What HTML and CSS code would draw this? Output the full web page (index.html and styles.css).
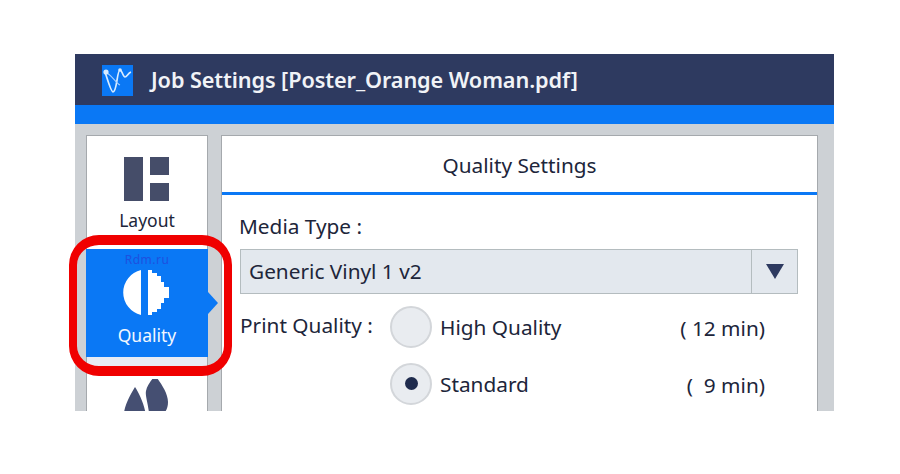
FILE: index.html
```html
<!DOCTYPE html>
<html lang="en">
<head>
<meta charset="utf-8">
<title>Job Settings</title>
<link rel="stylesheet" href="styles.css">
</head>
<body>
<div class="window">
  <header class="titlebar">
    <svg class="logo" viewBox="0 0 31 31" width="31" height="31" aria-hidden="true">
      <rect width="31" height="31" fill="#0a78f5"/>
      <path d="M3 7C6 16 9 27 11 27C15 27 15 5 18 5C20 5 21 12 23 12C25 12 26 8 29 7" fill="none" stroke="#d9ecff" stroke-width="1.7"/>
      <path d="M3 7C9 9 14 18 18 20" fill="none" stroke="#a9d0ff" stroke-width="1.1"/>
      <circle cx="4" cy="7" r="2.6" fill="#d9ecff"/>
      <circle cx="18" cy="5" r="1.8" fill="#d9ecff"/>
    </svg>
    <span class="title">Job Settings [Poster_Orange Woman.pdf]</span>
  </header>
  <div class="accent"></div>
  <div class="body">
    <nav class="sidebar">
      <div class="tab tab-layout">
        <svg class="icon-shift" viewBox="0 0 45 45" width="45" height="45" aria-hidden="true">
          <rect x="0" y="0" width="19" height="44" fill="#454d69"/>
          <rect x="26" y="0" width="19" height="18" fill="#454d69"/>
          <rect x="26" y="26" width="19" height="18" fill="#454d69"/>
        </svg>
        <span>Layout</span>
      </div>
      <div class="tab tab-quality">
        <span class="watermark">Rdm.ru</span>
        <svg class="icon-shift" viewBox="0 0 46 45" width="46" height="45" aria-hidden="true">
          <path d="M18 0.1A23 23 0 0 0 18 44.9Z" fill="#fff"/>
          <path d="M25 0H29V3H34V6H38V12H41V17H46V28H41V33H38V39H34V42H29V45H25Z" fill="#fff"/>
        </svg>
        <span>Quality</span>
        <i class="pointer"></i>
      </div>
      <div class="tab tab-ink">
        <svg class="icon-shift" viewBox="0 0 46 46" width="46" height="46" aria-hidden="true">
          <path d="M12 8C16 14 22 26 23 38H0.5C1 26 8 15 12 8Z" fill="#454f72"/>
          <path d="M32 -4C36 2 45 13 45 23C45 32 40 37 33 37C30 37 28 36 26 34C25 24 22 16 23 12C24 6 29 1 32 -4Z" fill="#454f72"/>
        </svg>
      </div>
    </nav>
    <section class="panel">
      <h1 class="panel-head">Quality Settings</h1>
      <div class="panel-body">
        <div class="label">Media Type :</div>
        <div class="select">
          <span class="select-value">Generic Vinyl 1 v2</span>
          <span class="select-btn"><i class="caret"></i></span>
        </div>
        <div class="quality">
          <div class="label quality-label">Print Quality :</div>
          <div class="options">
            <div class="option">
              <span class="radio"></span>
              <span class="option-name">High Quality</span>
              <span class="option-time">( 12 min)</span>
            </div>
            <div class="option">
              <span class="radio radio-on"></span>
              <span class="option-name">Standard</span>
              <span class="option-time">( &nbsp;9 min)</span>
            </div>
          </div>
        </div>
      </div>
    </section>
  </div>
</div>
<div class="highlight"></div>
</body>
</html>
```
FILE: styles.css
```css
* { box-sizing: border-box; }
html, body { margin: 0; height: 100%; background: #fff; overflow: hidden; }
body { position: relative; font-family: "Noto Sans", "Open Sans", sans-serif; color: #20253a; }
.window { margin: 54px 0 0 75px; width: 759px; height: 357px; display: flex; flex-direction: column; overflow: hidden; background: #cdd1d5; }
.titlebar { flex: 0 0 51px; background: #2e3a60; display: flex; align-items: center; padding: 0 0 0 27px; gap: 18px; }
.logo { display: block; margin-top: 2px; }
.title { color: #f1f3f7; font-size: 21.7px; font-weight: 600; letter-spacing: -0.1px; white-space: nowrap; }
.accent { flex: 0 0 19px; background: #0a78f5; }
.body { flex: 1; display: flex; padding: 11px 16px 0 11px; gap: 13px; min-height: 0; }
.sidebar { flex: 0 0 122px; background: #fff; border: 1px solid #a5a9ad; border-bottom: 0; display: flex; flex-direction: column; }
.tab { display: flex; flex-direction: column; align-items: center; flex: none; position: relative; font-size: 17.5px; }
.tab-layout { height: 113px; padding-top: 21px; gap: 6px; }
.icon-shift { margin-right: 2px; }
.tab-quality { height: 108px; background: #0a78f5; color: #f2f7ff; padding-top: 21px; gap: 8px; margin: 0 -1px 0 -1px; }
.tab-ink { height: 59px; border-top: 9px solid #e8ebf4; padding-top: 13px; overflow: hidden; }
.tab svg { display: block; flex: none; }
.watermark { position: absolute; top: 2px; left: 0; right: 0; text-align: center; font-size: 12px; color: #1e50e0; letter-spacing: 0.5px; }
.pointer { position: absolute; top: 43px; right: -10px; width: 0; height: 0; border-style: solid; border-width: 11px 0 11px 10px; border-color: transparent transparent transparent #0a78f5; }
.panel { flex: 1; background: #fff; border: 1px solid #a5a9ad; border-bottom: 0; min-width: 0; }
.panel-head { margin: 0; height: 59px; border-bottom: 3px solid #0a78f5; font-size: 20.8px; font-weight: 400; text-align: center; line-height: 58px; color: #20253a; }
.panel-body { padding: 18px 19px 0 17px; }
.label { font-size: 20.8px; line-height: 26px; }
.select { margin: 10px 0 0 1px; height: 45px; display: flex; background: #e3e8ee; border: 1px solid #b4bcbf; }
.select-value { flex: 1; font-size: 20.8px; line-height: 43px; padding-left: 8px; }
.select-btn { flex: 0 0 46px; border-left: 1px solid #b4bcbf; display: flex; align-items: center; justify-content: center; }
.caret { width: 0; height: 0; border-style: solid; border-width: 15px 9px 0 9px; border-color: #2e3a60 transparent transparent transparent; }
.quality { display: flex; margin: 11px 0 0 1px; }
.quality-label { flex: 0 0 150px; margin-top: 7px; }
.options { flex: 1; display: flex; flex-direction: column; gap: 14px; }
.option { display: flex; align-items: center; height: 43px; font-size: 20.8px; }
.radio { flex: 0 0 42px; height: 42px; border-radius: 50%; background: #e9ecf0; border: 2px solid #d3d6da; margin-right: 8px; display: flex; align-items: center; justify-content: center; }
.radio-on::after { content: ""; width: 13px; height: 13px; border-radius: 50%; background: #1f2b4d; }
.option-name { flex: 1; margin-top: 1px; }
.option-time { margin: 3px 33px 0 0; }
.highlight { position: absolute; left: 69px; top: 235px; width: 163px; height: 141px; border-style: solid; border-color: #f00000; border-width: 10px 8px; border-radius: 30px; }
```
